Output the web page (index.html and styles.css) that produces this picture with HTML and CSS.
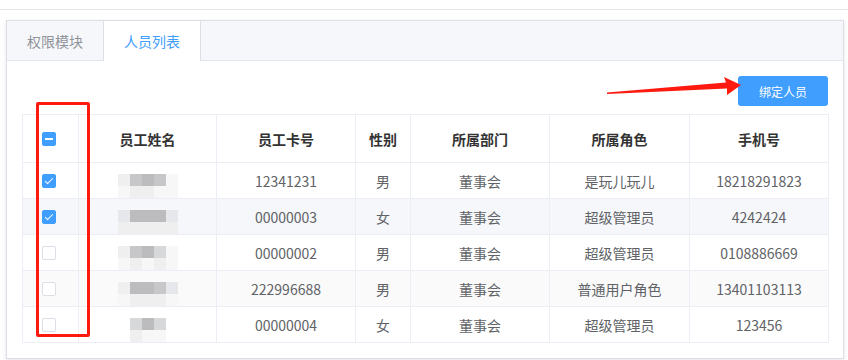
FILE: index.html
```html
<!DOCTYPE html>
<html lang="zh-CN">
<head>
    <meta charset="UTF-8">
    <meta name="viewport" content="width=device-width, initial-scale=1.0">
    <title>人员列表</title>
    <link rel="stylesheet" href="styles.css">
</head>
<body>
    <div class="topbar"></div>

    <div class="tabs">
        <div class="tabs-header">
            <div class="tab">权限模块</div>
            <div class="tab active">人员列表</div>
        </div>

        <div class="tabs-content">
            <div class="toolbar">
                <button class="btn-primary">绑定人员</button>
            </div>

            <table class="staff-table">
                <colgroup>
                    <col class="w-check">
                    <col class="w-name">
                    <col class="w-card">
                    <col class="w-sex">
                    <col class="w-dept">
                    <col class="w-role">
                    <col class="w-phone">
                </colgroup>
                <thead>
                    <tr>
                        <th class="check-cell"><span class="checkbox indeterminate"></span></th>
                        <th>员工姓名</th>
                        <th>员工卡号</th>
                        <th>性别</th>
                        <th>所属部门</th>
                        <th>所属角色</th>
                        <th>手机号</th>
                    </tr>
                </thead>
                <tbody>
                    <tr>
                        <td class="check-cell"><span class="checkbox checked"></span></td>
                        <td>
                            <div class="mosaic">
                                <span class="b"></span><span class="e"></span><span class="f"></span><span class="e"></span><span class="a"></span>
                                <span class="a"></span><span class="b"></span><span class="b"></span><span class="a"></span><span class="a"></span>
                            </div>
                        </td>
                        <td>12341231</td>
                        <td>男</td>
                        <td>董事会</td>
                        <td>是玩儿玩儿</td>
                        <td>18218291823</td>
                    </tr>
                    <tr class="row-hover">
                        <td class="check-cell"><span class="checkbox checked"></span></td>
                        <td>
                            <div class="mosaic">
                                <span class="c"></span><span class="f"></span><span class="f"></span><span class="f"></span><span class="c"></span>
                                <span class="b"></span><span class="b"></span><span class="b"></span><span class="b"></span><span class="b"></span>
                            </div>
                        </td>
                        <td>00000003</td>
                        <td>女</td>
                        <td>董事会</td>
                        <td>超级管理员</td>
                        <td>4242424</td>
                    </tr>
                    <tr>
                        <td class="check-cell"><span class="checkbox"></span></td>
                        <td>
                            <div class="mosaic">
                                <span class="b"></span><span class="e"></span><span class="f"></span><span class="d"></span><span class="a"></span>
                                <span class="a"></span><span class="b"></span><span class="a"></span><span class="b"></span><span class="a"></span>
                            </div>
                        </td>
                        <td>00000002</td>
                        <td>男</td>
                        <td>董事会</td>
                        <td>超级管理员</td>
                        <td>0108886669</td>
                    </tr>
                    <tr class="row-striped">
                        <td class="check-cell"><span class="checkbox"></span></td>
                        <td>
                            <div class="mosaic">
                                <span class="b"></span><span class="f"></span><span class="f"></span><span class="e"></span><span class="c"></span>
                                <span class="a"></span><span class="b"></span><span class="b"></span><span class="b"></span><span class="a"></span>
                            </div>
                        </td>
                        <td>222996688</td>
                        <td>男</td>
                        <td>董事会</td>
                        <td>普通用户角色</td>
                        <td>13401103113</td>
                    </tr>
                    <tr>
                        <td class="check-cell"><span class="checkbox"></span></td>
                        <td>
                            <div class="mosaic mosaic-3">
                                <span class="d"></span><span class="f"></span><span class="d"></span>
                                <span class="b"></span><span class="a"></span><span class="a"></span>
                            </div>
                        </td>
                        <td>00000004</td>
                        <td>女</td>
                        <td>董事会</td>
                        <td>超级管理员</td>
                        <td>123456</td>
                    </tr>
                </tbody>
            </table>
        </div>
    </div>

    <!-- annotations drawn on top of the screenshot -->
    <div class="red-box"></div>
    <svg class="arrow" width="848" height="360" viewBox="0 0 848 360">
        <polygon points="607,92.5 726,82.5 724,77 741,85 727,95 727,88.5 607,94" fill="#ff1a10"/>
    </svg>
</body>
</html>
```

FILE: styles.css
```css
body {
    margin: 0;
    background-color: white;
    font-family: "Noto Sans CJK SC", "Liberation Sans", sans-serif;
    font-size: 14px;
    color: #606266;
    position: relative;
    width: 848px;
    height: 360px;
    overflow: hidden;
}

.topbar {
    height: 9px;
    border-bottom: 1px solid #e6e6e6;
    margin-bottom: 10px;
}

.tabs {
    margin: 0 4px 0 6px;
    border: 1px solid #dcdfe6;
    box-shadow: 0 2px 4px rgba(0, 0, 0, 0.08), 0 0 6px rgba(0, 0, 0, 0.03);
    background-color: white;
}

.tabs-header {
    display: flex;
    height: 40px;
    box-sizing: border-box;
    background-color: #f5f7fa;
    border-bottom: 1px solid #e4e7ed;
}

.tab {
    height: 40px;
    line-height: 40px;
    padding: 0 20px;
    color: #909399;
    box-sizing: border-box;
}

.tab.active {
    color: #409eff;
    background-color: white;
    border-left: 1px solid #dcdfe6;
    border-right: 1px solid #dcdfe6;
}

.tabs-content {
    padding: 15px;
}

.toolbar {
    display: flex;
    justify-content: flex-end;
    margin-bottom: 8px;
}

.btn-primary {
    width: 90px;
    height: 30px;
    border: none;
    border-radius: 3px;
    background-color: #409eff;
    color: white;
    font-family: inherit;
    font-size: 12px;
    cursor: pointer;
}

.staff-table {
    width: 100%;
    table-layout: fixed;
    border-collapse: collapse;
    line-height: 20px;
}

.w-check { width: 56px; }
.w-name { width: 138px; }
.w-card { width: 139px; }
.w-sex { width: 55px; }
.w-dept { width: 139px; }
.w-role { width: 140px; }
.w-phone { width: 139px; }

.staff-table th,
.staff-table td {
    border: 1px solid #ebeef5;
    padding: 0;
    text-align: center;
    vertical-align: middle;
}

.staff-table th {
    height: 47px;
    color: #333333;
    font-weight: bold;
}

.staff-table td {
    height: 35px;
}

.staff-table .check-cell {
    text-align: left;
    padding-left: 19px;
}

.row-hover td {
    background-color: #f5f7fa;
}

.row-striped td {
    background-color: #fafafa;
}

.checkbox {
    display: block;
    width: 14px;
    height: 14px;
    box-sizing: border-box;
    border: 1px solid #dcdfe6;
    border-radius: 2px;
    background-color: white;
    position: relative;
}

.checkbox.checked,
.checkbox.indeterminate {
    background-color: #409eff;
    border-color: #409eff;
}

.checkbox.checked::after {
    content: "";
    position: absolute;
    left: 4px;
    top: 1px;
    width: 3px;
    height: 7px;
    border: 1px solid white;
    border-left: 0;
    border-top: 0;
    transform: rotate(45deg);
}

.checkbox.indeterminate::after {
    content: "";
    position: absolute;
    left: 2px;
    right: 2px;
    top: 5px;
    height: 2px;
    background-color: white;
}

.mosaic {
    display: grid;
    width: max-content;
    margin: 10px auto 0;
    grid-template-columns: repeat(5, 12px);
    grid-auto-rows: 12px;
}

.mosaic-3 {
    grid-template-columns: repeat(3, 12px);
}

.mosaic .a { background-color: #f7f7f7; }
.mosaic .b { background-color: #efeff0; }
.mosaic .c { background-color: #e6e7ea; }
.mosaic .d { background-color: #d7d8d9; }
.mosaic .e { background-color: #c7c7c9; }
.mosaic .f { background-color: #bcbcbe; }

.red-box {
    position: absolute;
    left: 36px;
    top: 102px;
    width: 54px;
    height: 235px;
    box-sizing: border-box;
    border: 3px solid #ff1a10;
    border-radius: 2px;
}

.arrow {
    position: absolute;
    left: 0;
    top: 0;
}
```
